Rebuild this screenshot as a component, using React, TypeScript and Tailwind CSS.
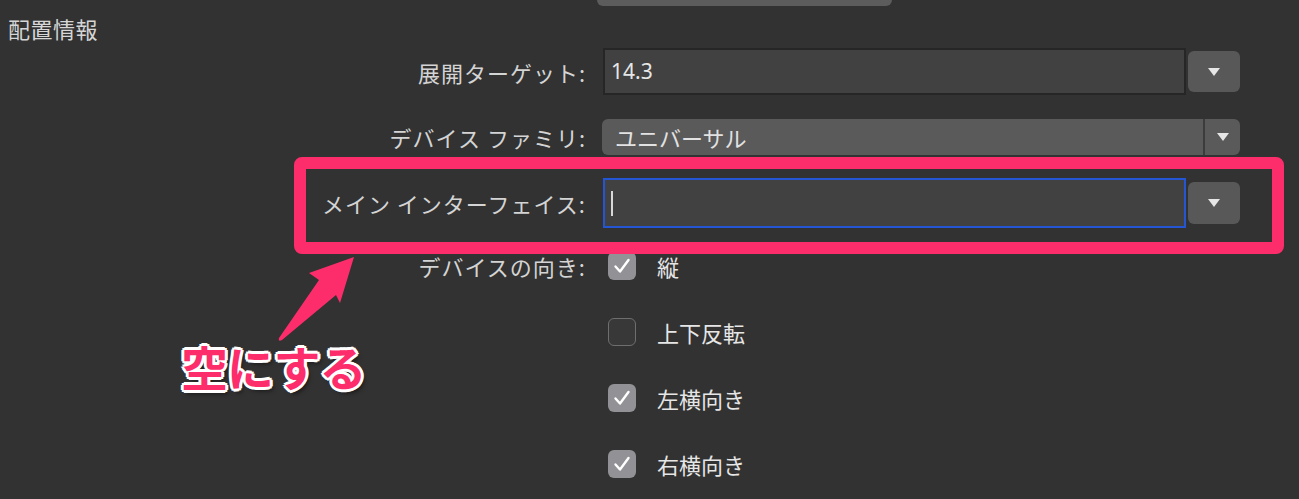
import React from "react";

const jp = { fontFamily: '"Noto Sans CJK JP", "Noto Sans", sans-serif' };

function Arrow() {
    return (
        <svg width="14" height="10" viewBox="0 0 14 10" className="block">
            <path d="M1 1 L13 1 L7 9 Z" fill="#e6e6e6" />
        </svg>
    );
}

function Check({ checked }: { checked: boolean }) {
    if (!checked) {
        return <div className="w-[28px] h-[28px] rounded-[6px] border-[1.5px] border-[#6e6e6e] bg-[#383838]" />;
    }
    return (
        <div className="w-[28px] h-[28px] rounded-[6px] bg-[#929296] flex items-center justify-center">
            <svg width="18" height="16" viewBox="0 0 18 16">
                <path d="M2.5 8.5 L7 13.5 L15.5 2" fill="none" stroke="#ffffff" strokeWidth="2.4" strokeLinecap="round" strokeLinejoin="round" />
            </svg>
        </div>
    );
}

function Label({ children }: { children: React.ReactNode }) {
    return <div className="w-[586px] text-right text-[22px] tracking-[1px] text-[#d4d4d4] leading-none whitespace-nowrap">{children}</div>;
}

export default function App() {
    const orient = [
        { t: "縦", c: true },
        { t: "上下反転", c: false },
        { t: "左横向き", c: true },
        { t: "右横向き", c: true },
    ];

    return (
        <div className="relative w-full h-[499px] bg-[#323232] overflow-hidden" style={jp}>
            <div className="ml-[597px] w-[295px] h-[6px] bg-[#5c5c5c] rounded-b-[6px]" />

            <div className="mt-[8px] ml-[8px] h-[28px] leading-[28px] text-[22px] tracking-[0.5px] text-[#d6d6d6]">配置情報</div>

            {/* 展開ターゲット */}
            <div className="mt-[6px] flex items-center">
                <Label>展開ターゲット:</Label>
                <div className="ml-[17px] w-[583px] h-[47px] bg-[#414141] border-2 border-[#262626] flex items-center pl-[6px] text-[21px] text-[#e6e6e6]" style={{ fontFamily: '"Noto Sans", sans-serif' }}>
                    14.3
                </div>
                <div className="ml-[2px] w-[52px] h-[41px] bg-[#585858] rounded-[6px] flex items-center justify-center">
                    <Arrow />
                </div>
            </div>

            {/* デバイス ファミリ */}
            <div className="mt-[24px] flex items-center">
                <Label>デバイス ファミリ:</Label>
                <div className="ml-[16px] w-[638px] h-[36px] bg-[#5a5a5a] rounded-[6px] flex items-center">
                    <div className="flex-1 pl-[13px] text-[22px] text-[#e2e2e2] leading-none">ユニバーサル</div>
                    <div className="w-[2px] h-full bg-[#3c3c3c]" />
                    <div className="w-[35px] flex items-center justify-center">
                        <Arrow />
                    </div>
                </div>
            </div>

            {/* メイン インターフェイス */}
            <div className="mt-[23px] flex items-center">
                <Label>メイン インターフェイス:</Label>
                <div className="ml-[17px] w-[583px] h-[50px] bg-[#414141] border-2 border-[#2456d4] flex items-center pl-[6px]">
                    <div className="w-[2px] h-[25px] bg-[#d8d8d8]" />
                </div>
                <div className="ml-[2px] w-[52px] h-[42px] bg-[#585858] rounded-[6px] flex items-center justify-center">
                    <Arrow />
                </div>
            </div>

            {/* デバイスの向き */}
            <div className="mt-[24px] flex items-start">
                <div className="h-[28px] flex items-center">
                    <Label>デバイスの向き:</Label>
                </div>
                <div className="ml-[22px] flex flex-col gap-[38px]">
                    {orient.map(o => (
                        <div key={o.t} className="h-[28px] flex items-center gap-[21px]">
                            <Check checked={o.c} />
                            <span className="text-[22px] text-[#e6e6e6] leading-none">{o.t}</span>
                        </div>
                    ))}
                </div>
            </div>

            {/* annotation */}
            <div className="absolute left-[294px] top-[157px] w-[990px] h-[97px] border-[12px] border-[#fd2d6c] rounded-[8px]" />

            <svg className="absolute left-0 top-0" width="400" height="360" viewBox="0 0 400 360">
                <path d="M354 257 L340 303 L336 295 L282 340 Q278 342 279 338 L319 280 L309 273 Z" fill="#fd2d6c" />
            </svg>

            <div
                className="absolute left-[181px] top-[342px] text-[47px] font-bold text-[#fd2d6c] leading-none tracking-[-1px]"
                style={{
                    ...jp,
                    textShadow:
                        "3px 0 0 #fff, -3px 0 0 #fff, 0 3px 0 #fff, 0 -3px 0 #fff, 2px 2px 0 #fff, -2px -2px 0 #fff, 2px -2px 0 #fff, -2px 2px 0 #fff, 3px 4px 4px rgba(0,0,0,0.5)",
                }}
            >
                空にする
            </div>
        </div>
    );
}
